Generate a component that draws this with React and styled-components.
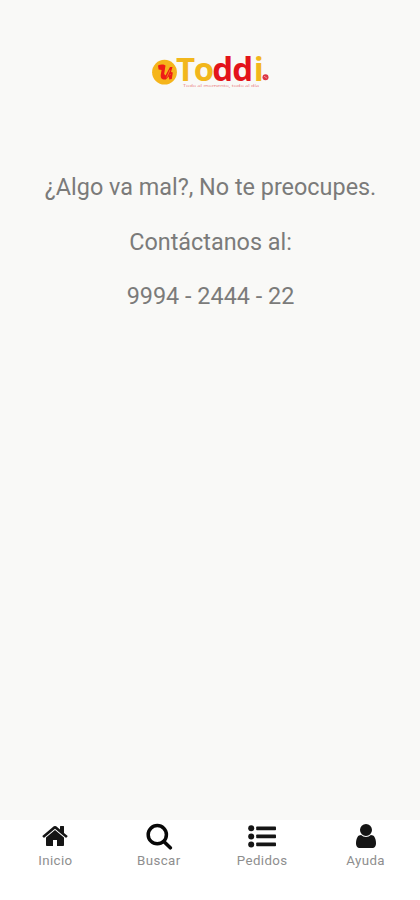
import styled, { createGlobalStyle } from 'styled-components';

const GlobalStyle = createGlobalStyle`
  * {
    box-sizing: border-box;
  }

  body {
    margin: 0;
    background: #f9f9f7;
    font-family: Roboto, 'Liberation Sans', sans-serif;
  }
`;

const Screen = styled.div`
  display: flex;
  flex-direction: column;
  height: 900px;
  background: #f9f9f7;
`;

const Header = styled.header`
  display: flex;
  justify-content: center;
  padding-top: 40px;
  height: 160px;
`;

const Logo = styled.svg`
  width: 124px;
  height: 56px;
  font-family: 'Open Sans', sans-serif;
`;

const Content = styled.main`
  flex: 1;
  display: flex;
  flex-direction: column;
  align-items: center;
  padding-left: 1px;
`;

const Message = styled.p`
  margin: 0;
  color: #7b7b7a;
  font-size: 23.4px;
  line-height: 54.7px;
  white-space: nowrap;
`;

const TabBar = styled.nav`
  display: grid;
  grid-template-columns: repeat(4, 103.4px);
  justify-content: center;
  height: 80px;
  padding-left: 1px;
  background: #fff;
`;

const Tab = styled.a`
  display: flex;
  flex-direction: column;
  align-items: center;
  padding-top: 2px;
  color: #8e8e8e;
  font-size: 13.3px;
  line-height: 16px;
  letter-spacing: 0.4px;

  svg {
    width: 28px;
    height: 28px;
    margin-bottom: 3px;
    fill: #151515;
  }
`;

const ToddiLogo = () => (
  <Logo viewBox="0 -10 124 56">
    <circle cx="16.5" cy="22.2" r="12.4" fill="#f5b51b" />
    <path
      d="M10 15.5c3-1.8 6.500-1 7.500 0l-1.300 8.500 1.300 1.500L22 17h2.500l-1.500 5 1.800.5-1 6.500-2.500.5-.5-3-3 3c-4 .5-5.500-1.500-5-5l.8-4.500-3-.5z"
      fill="#ee1c16"
    />
    <path d="M22 20l-3.3 7.5M21.5 25l1-.5" stroke="#f8a51b" strokeWidth="0.7" fill="none" />
    <text y="30.8" fontSize="33" fontWeight="700">
      <tspan x="28" fill="#f2b71c">T</tspan>
      <tspan x="45.800" fill="#f2b71c">o</tspan>
      <tspan x="64.300" fill="#e3141b">d</tspan>
      <tspan x="84.300" fill="#e3141b">d</tspan>
      <tspan x="105.800" fill="#f2b71c">i</tspan>
    </text>
    <circle cx="117.5" cy="27.2" r="3" fill="#dc3545" />
    <path d="M116 26.2l3 2" stroke="#f3a6a8" strokeWidth="0.8" />
    <text x="35" y="37" fontSize="4.2" fill="#e97b80" textLength="76" lengthAdjust="spacingAndGlyphs">
      Todo al momento, todo al día
    </text>
  </Logo>
);

const HomeIcon = () => (
  <svg viewBox="0 0 1792 1792">
    <path d="M1472 992v480q0 26-19 45t-45 19h-384v-384h-256v384h-384q-26 0-45-19t-19-45v-480q0-1 .5-3t.5-3l575-474 575 474q1 2 1 6zm223-69l-62 74q-8 9-21 11h-3q-13 0-21-7l-692-577-692 577q-12 8-24 7-13-2-21-11l-62-74q-8-10-7-23.5t11-21.5l719-599q32-26 76-26t76 26l244 204v-195q0-14 9-23t23-9h192q14 0 23 9t9 23v408l219 182q10 8 11 21.5t-7 23.5z" />
  </svg>
);

const SearchIcon = () => (
  <svg viewBox="0 0 28 28">
    <circle cx="12.3" cy="12.7" r="9.1" fill="none" stroke="#080808" strokeWidth="3.5" />
    <path d="M18.8 19.5l6.5 6.3" fill="none" stroke="#080808" strokeWidth="3.6" strokeLinecap="round" />
  </svg>
);

const ListIcon = () => (
  <svg viewBox="0 0 28 28">
    {[6.3, 14.4, 22.4].map((y) => (
      <g key={y}>
        <circle cx="3.2" cy={y} r="3" />
        <rect x="8.2" y={y - 1.9} width="19.8" height="3.8" rx="0.8" />
      </g>
    ))}
  </svg>
);

const UserIcon = () => (
  <svg viewBox="-256 0 1792 1792">
    <path d="M1280 1399q0 109-62.5 187t-150.5 78h-854q-88 0-150.5-78t-62.5-187q0-85 8.5-160.5t31.5-152 58.5-131 94-89 134.5-34.5q131 128 313 128t313-128q76 0 134.5 34.5t94 89 58.5 131 31.5 152 8.5 160.5zm-256-887q0 159-112.5 271.5t-271.5 112.5-271.5-112.5-112.5-271.5 112.5-271.5 271.5-112.5 271.5 112.5 112.5 271.5z" />
  </svg>
);

const tabs = [
  { label: 'Inicio', Icon: HomeIcon },
  { label: 'Buscar', Icon: SearchIcon },
  { label: 'Pedidos', Icon: ListIcon },
  { label: 'Ayuda', Icon: UserIcon },
];

const App = () => (
  <>
    <GlobalStyle />
    <Screen>
      <Header>
        <ToddiLogo />
      </Header>
      <Content>
        <Message>¿Algo va mal?, No te preocupes.</Message>
        <Message>Contáctanos al:</Message>
        <Message>9994 - 2444 - 22</Message>
      </Content>
      <TabBar>
        {tabs.map(({ label, Icon }) => (
          <Tab key={label}>
            <Icon />
            {label}
          </Tab>
        ))}
      </TabBar>
    </Screen>
  </>
);

export default App;
